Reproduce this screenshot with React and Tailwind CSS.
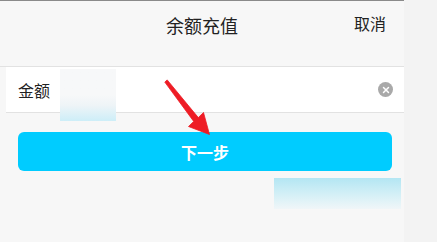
import { X } from 'lucide-react';

const font = { fontFamily: '"Noto Sans CJK SC", "Noto Sans", sans-serif' };

const Arrow = () => (
  <svg className="absolute left-[160px] top-[76px] pointer-events-none" width="60" height="62" viewBox="0 0 60 62">
    <polygon
      points="4.8,5.1 7.2,2.9 38.3,40.6 43.5,35.5 49.5,57.5 28.5,49.5 33.7,44.4"
      fill="#ee1c25"
      stroke="#ee1c25"
      strokeWidth="0.8"
      strokeLinejoin="round"
    />
  </svg>
);

export default function App() {
  return (
    <div className="flex w-[437px] h-[242px] overflow-hidden bg-[#f4f4f4]" style={font}>
      <div className="relative w-[404px] h-full bg-[#f7f7f7] border-t border-[#8a8a8a]">
        {/* Header */}
        <div className="relative h-[66px] flex items-center justify-center border-b border-[#e2e2e2]">
          <span className="text-[18px] text-[#222] -mt-[17px]">余额充值</span>
          <button className="absolute right-[18px] top-[10px] text-[16px] text-[#222]">取消</button>
        </div>

        {/* Amount row */}
        <div className="ml-[6px] h-[46px] bg-white border-b border-[#e2e2e2] flex items-center pl-[12px] pr-[11px]">
          <span className="text-[16px] text-[#222]">金额</span>
          <div className="flex-1" />
          <span className="w-[15px] h-[15px] rounded-full bg-[#a9a9a9] flex items-center justify-center">
            <X className="w-[10px] h-[10px] text-white" strokeWidth={3.5} />
          </span>
        </div>

        {/* Button */}
        <div className="px-[18px] pr-[12px] mt-[19px]">
          <button className="w-full h-[39px] rounded-[6px] bg-[#00ccff] text-white text-[16px] font-bold flex items-center justify-center">
            下一步
          </button>
        </div>

        {/* Blurred patches */}
        <div className="absolute left-[60px] top-[68px] w-[56px] h-[52px] bg-gradient-to-b from-[#f7f8f9] from-50% via-[#eef4f7] via-70% to-[#cdeef8]" />
        <div className="absolute left-[274px] top-[177px] w-[127px] h-[31px] bg-gradient-to-b from-[#b3e6f3] via-[#d2eff6] to-[#f0f6f8]" />

        <Arrow />
      </div>
      <div className="flex-1 bg-[#f3f3f3]" />
    </div>
  );
}
